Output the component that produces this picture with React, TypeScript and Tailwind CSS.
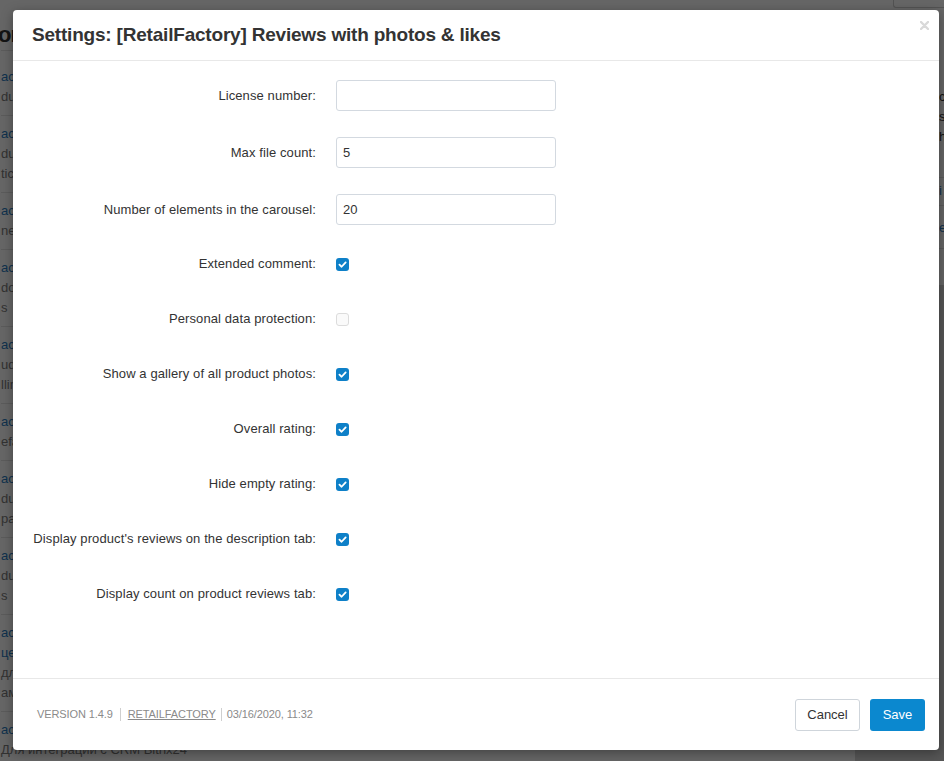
import React from "react";

const leftItems: { lines: { t: string; blue?: boolean }[] }[] = [
  { lines: [{ t: "acrit.reviews — Отзывы", blue: true }, { t: "dule for product reviews" }] },
  { lines: [{ t: "acrit.export — Экспорт", blue: true }, { t: "duct feeds and exports" }, { t: "tic settings" }] },
  { lines: [{ t: "acrit.core — Ядро", blue: true }, { t: "nel for managers" }] },
  { lines: [{ t: "acrit.seo — SEO", blue: true }, { t: "downloads and files" }, { t: "s" }] },
  { lines: [{ t: "acrit.crm — CRM", blue: true }, { t: "udo integration" }, { t: "lling and payments" }] },
  { lines: [{ t: "acrit.feed — Фиды", blue: true }, { t: "efault settings" }] },
  { lines: [{ t: "acrit.mail — Почта", blue: true }, { t: "duct import tools" }, { t: "pages" }] },
  { lines: [{ t: "acrit.search — Поиск", blue: true }, { t: "duct search module" }, { t: "s" }] },
  { lines: [{ t: "acrit.price — Цены", blue: true }, { t: "цены и скидки", blue: true }, { t: " для каталога" }, { t: "ами товаров" }] },
  { lines: [{ t: "acrit.bitrix24 — Битрикс24", blue: true }, { t: "Для интеграции с CRM Bitrix24" }] },
];

function Check({ checked }: { checked: boolean }) {
  if (!checked) {
    return <span className="block h-[13px] w-[13px] rounded-[3px] border border-[#dcdcdc] bg-[#fafafa]" />;
  }
  return (
    <span className="flex h-[13px] w-[13px] items-center justify-center rounded-[3px] bg-[#0e80c8]">
      <svg width="9" height="9" viewBox="0 0 10 10">
        <path d="M1.6 5.2 L4 7.5 L8.5 2.6" fill="none" stroke="#fff" strokeWidth="2" strokeLinecap="round" strokeLinejoin="round" />
      </svg>
    </span>
  );
}

const inputRows = [
  { label: "License number:", value: "" },
  { label: "Max file count:", value: "5" },
  { label: "Number of elements in the carousel:", value: "20" },
];

const checkRows = [
  { label: "Extended comment:", checked: true },
  { label: "Personal data protection:", checked: false },
  { label: "Show a gallery of all product photos:", checked: true },
  { label: "Overall rating:", checked: true },
  { label: "Hide empty rating:", checked: true },
  { label: "Display product's reviews on the description tab:", checked: true },
  { label: "Display count on product reviews tab:", checked: true },
];

export default function App() {
  return (
    <div className="relative h-[761px] w-full overflow-hidden bg-white font-['Liberation_Sans',Arial,sans-serif]">
      {/* background page */}
      <div className="flex h-full">
        <div className="flex-1 pl-[1px]">
          <div className="h-[51px] border-b border-[#e4e4e4] pt-[20px] text-[22px] font-bold leading-[30px] text-[#333]">
            <span className="-ml-[3px] tracking-[-1px]">or</span>
          </div>
          <div className="pt-[8px]">
            {leftItems.map((it, i) => (
              <div key={i} className="border-b border-[#e4e4e4] pb-[8px] pt-[8px]">
                {it.lines.map((l, j) => (
                  <div key={j} className={`whitespace-nowrap text-[13px] leading-[20px] ${l.blue ? "text-[#2a7bc0]" : "text-[#7d7d7d]"}`}>
                    {l.t}
                  </div>
                ))}
              </div>
            ))}
          </div>
        </div>
        <div className="flex w-[89px] flex-col">
          <div className="ml-[38px] h-[8px] rounded-bl-[3px] border-b border-l border-[#cfcfcf]" />
          <div className="h-[277px] bg-white pl-[84px] pt-[79px] text-[13px] leading-[20px] text-[#333]">
            <div>c</div>
            <div>s</div>
            <div>h</div>
            <div className="mt-[30px] border-t border-[#e4e4e4] pt-[3px] text-[#2a7bc0]">i</div>
            <div className="mt-[4px] border-t border-[#e4e4e4] pt-[12px] text-[#2a7bc0]">e</div>
            <div className="mt-[10px] border-t border-[#e4e4e4]" />
          </div>
          <div className="flex-1 bg-[#d6d6d6]" />
        </div>
      </div>

      {/* overlay */}
      <div className="absolute inset-0 bg-black/60" />

      {/* modal */}
      <div className="absolute left-[13px] top-[10px] flex h-[740px] w-[926px] flex-col rounded-[4px] bg-white shadow-[0_3px_12px_rgba(0,0,0,0.35)]">
        <div className="relative flex h-[51px] shrink-0 items-center border-b border-[#e8e8e8] pl-[19px]">
          <h1 className="text-[19px] font-bold tracking-[-0.2px] text-[#333]">
            Settings: [RetailFactory] Reviews with photos &amp; likes
          </h1>
          <button className="absolute right-[10px] top-[11px] flex h-[9px] w-[9px] items-center justify-center">
            <svg width="9" height="9" viewBox="0 0 9 9">
              <path d="M1 1 L8 8 M8 1 L1 8" stroke="#d9d9d9" strokeWidth="2.4" strokeLinecap="round" />
            </svg>
          </button>
        </div>

        <div className="flex-1 pt-[19px] text-[13px] text-[#333]">
          {inputRows.map((r) => (
            <div key={r.label} className="mb-[26px] flex h-[31px] items-center">
              <label className="w-[303px] shrink-0 text-right tracking-[0.1px]">{r.label}</label>
              <input
                readOnly
                value={r.value}
                className="ml-[20px] h-[31px] w-[220px] rounded-[3px] border border-[#d3d9e0] bg-white px-[6px] text-[13px] text-[#333] outline-none"
              />
            </div>
          ))}
          {checkRows.map((r) => (
            <div key={r.label} className="mb-[29px] flex h-[26px] items-center">
              <label className="w-[303px] shrink-0 text-right tracking-[0.1px]">{r.label}</label>
              <span className="ml-[20px]">
                <Check checked={r.checked} />
              </span>
            </div>
          ))}
        </div>

        <div className="flex h-[72px] shrink-0 items-center justify-between border-t border-[#e8e8e8] pl-[24px] pr-[14px]">
          <div className="flex items-center text-[11px] tracking-[-0.1px] text-[#8a8a8a]">
            <span>VERSION 1.4.9</span>
            <span className="mx-[7px] h-[13px] w-px bg-[#cfcfcf]" />
            <span className="underline">RETAILFACTORY</span>
            <span className="mx-[5px] h-[13px] w-px bg-[#cfcfcf]" />
            <span>03/16/2020, 11:32</span>
          </div>
          <div className="flex items-center gap-[10px] pt-[1px]">
            <button className="h-[32px] w-[65px] rounded-[3px] border border-[#cfd5db] bg-white text-[13px] text-[#333]">
              Cancel
            </button>
            <button className="h-[32px] w-[55px] rounded-[3px] bg-[#0b88cf] text-[13px] text-white">
              Save
            </button>
          </div>
        </div>
      </div>
    </div>
  );
}
